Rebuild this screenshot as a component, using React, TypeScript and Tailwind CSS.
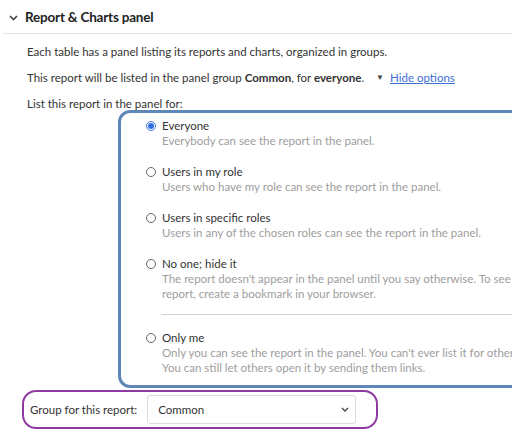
import { useState } from "react";

interface Option {
  id: string;
  label: string;
  desc: string[];
}

const options: Option[] = [
  { id: "everyone", label: "Everyone", desc: ["Everybody can see the report in the panel."] },
  { id: "role", label: "Users in my role", desc: ["Users who have my role can see the report in the panel."] },
  {
    id: "specific",
    label: "Users in specific roles",
    desc: ["Users in any of the chosen roles can see the report in the panel."],
  },
  {
    id: "none",
    label: "No one; hide it",
    desc: [
      "The report doesn't appear in the panel until you say otherwise. To see the",
      "report, create a bookmark in your browser.",
    ],
  },
  {
    id: "me",
    label: "Only me",
    desc: [
      "Only you can see the report in the panel. You can't ever list it for others.",
      "You can still let others open it by sending them links.",
    ],
  },
];

const Radio = ({ checked }: { checked: boolean }) =>
  checked ? (
    <span className="w-[10px] h-[10px] rounded-full border border-[#3b7be0] bg-white flex items-center justify-center shrink-0">
      <span className="w-[6px] h-[6px] rounded-full bg-[#2f6fe0]" />
    </span>
  ) : (
    <span className="w-[10px] h-[10px] rounded-full border border-[#666] bg-white shrink-0" />
  );

const App = () => {
  const [selected, setSelected] = useState("everyone");
  return (
    <div className="w-[512px] h-[439px] overflow-hidden bg-white text-[#333] font-['Lato',sans-serif] text-[11.5px]">
      <div className="ml-[3px] h-[34px] flex items-center border-b border-[#e3e3e3]">
        <svg width="9" height="6" viewBox="0 0 9 6" className="ml-[6px] mt-[2px]">
          <path d="M1 1 L4.5 4.5 L8 1" fill="none" stroke="#444" strokeWidth="1.6" />
        </svg>
        <span className="ml-[7px] mt-[1px] text-[13.5px] font-bold tracking-[-0.2px] text-[#222]">
          Report &amp; Charts panel
        </span>
      </div>

      <div className="pl-[27px]">
        <p className="mt-[10px] leading-[15px]">
          Each table has a panel listing its reports and charts, organized in groups.
        </p>
        <p className="mt-[11px] leading-[15px] flex items-center">
          <span>
            This report will be listed in the panel group <b>Common</b>, for <b>everyone</b>.
          </span>
          <span className="ml-[12px] text-[8px] text-[#444]">▼</span>
          <a className="ml-[6px] text-[#3b6fd6] underline">Hide options</a>
        </p>
        <p className="mt-[11px] leading-[15px]">List this report in the panel for:</p>
      </div>

      <div className="ml-[118px] mr-[-20px] mt-[-1px] border-[3px] border-[#5e87b8] rounded-[12px] pl-[25px] pt-[5px] pb-[10px]">
        {options.map((o, i) => (
          <div key={o.id}>
            {o.id === "me" && <div className="ml-[15px] mt-[13px] mb-[15px] border-t border-[#cfcfcf]" />}
            <label
              className={`flex flex-col cursor-pointer ${i > 0 && o.id !== "me" ? "mt-[16px]" : ""}`}
              onClick={() => setSelected(o.id)}
            >
              <span className="flex items-center gap-[6px] leading-[15px] text-[#333]">
                <Radio checked={selected === o.id} />
                {o.label}
              </span>
              {o.desc.map((d) => (
                <span key={d} className="ml-[16px] leading-[15px] text-[#9d9d9d] whitespace-nowrap">
                  {d}
                </span>
              ))}
            </label>
          </div>
        ))}
      </div>

      <div className="ml-[22px] mt-[2px] w-[356px] h-[39px] border-2 border-[#8e3aa0] rounded-[14px] flex items-center pl-[6px]">
        <span className="text-[#333]">Group for this report:</span>
        <div className="ml-[10px] w-[209px] h-[29px] border border-[#dcdcdc] rounded-[3px] flex items-center justify-between pl-[10px] pr-[6px]">
          <span>Common</span>
          <svg width="8" height="5" viewBox="0 0 8 5">
            <path d="M1 1 L4 4 L7 1" fill="none" stroke="#444" strokeWidth="1.3" />
          </svg>
        </div>
      </div>
    </div>
  );
};

export default App;
